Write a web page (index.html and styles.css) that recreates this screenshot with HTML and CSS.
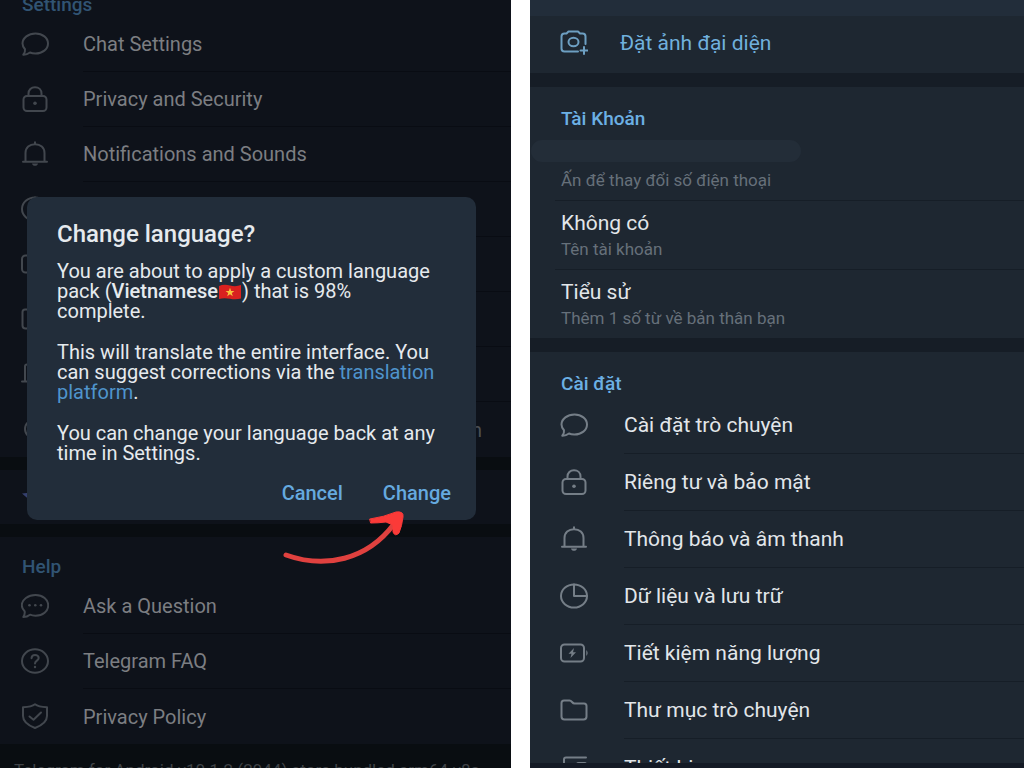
FILE: index.html
```html
<!DOCTYPE html>
<html lang="en">
<head>
    <meta charset="UTF-8">
    <meta name="viewport" content="width=device-width, initial-scale=1.0">
    <title>Telegram language settings</title>
    <link rel="stylesheet" href="styles.css">
</head>
<body>
    <!-- Shared icons -->
    <svg class="sprite" aria-hidden="true">
        <symbol id="i-chat" viewBox="0 0 28 26">
            <path d="M14.5 2.5C21.5 2.5 27 6.800 27 12.500S21.500 22.500 14.500 22.500C12.500 22.500 10.500 22.200 9 21.500C7 23 4.500 23.800 2.300 23.700C3.800 21.700 4.300 19.800 4 18.200C2.400 16.500 1.500 14.600 1.500 12.500C1.500 6.800 7.500 2.500 14.500 2.500Z"/>
        </symbol>
        <symbol id="i-lock" viewBox="0 0 28 26">
            <rect x="2.500" y="10" width="23" height="15" rx="3.500"/>
            <path d="M7.500 10V7.500C7.500 3.800 10.200 1.200 14 1.200S20.500 3.800 20.500 7.500V10"/>
            <circle class="dot" cx="14" cy="17.300" r="1.800"/>
        </symbol>
        <symbol id="i-bell" viewBox="0 0 28 26">
            <path d="M2 20.800H26M4.500 20.500V12C4.500 6.500 8.500 3.200 14 3.200S23.500 6.500 23.500 12V20.500M14 1.300V3"/>
            <path class="dot" d="M11 22.500H17C16.700 24 15.500 24.800 14 24.800S11.300 24 11 22.500Z"/>
        </symbol>
        <symbol id="i-data" viewBox="0 0 28 26">
            <ellipse cx="14" cy="13" rx="13" ry="11.500"/>
            <path d="M14 1.500V13H27"/>
        </symbol>
        <symbol id="i-battery" viewBox="0 0 28 26">
            <rect x="1" y="4.500" width="23" height="17" rx="3.500"/>
            <path class="dot" d="M14 8L8.500 13.800H11.500L10.500 18L16 12.200H13ZM26.300 10Q29 13 26.300 16Z"/>
        </symbol>
        <symbol id="i-folder" viewBox="0 0 28 26">
            <path d="M4 3.500H9.500C12 3.500 12 6.500 14.500 6.500H24C25.800 6.500 26.500 7.500 26.500 9V19.500C26.500 21.500 25.500 22.500 23.500 22.500H4.500C2.500 22.500 1.500 21.500 1.500 19.500V6C1.500 4.300 2.300 3.500 4 3.500Z"/>
        </symbol>
        <symbol id="i-devices" viewBox="0 0 28 26">
            <path d="M4 20V5.500Q4 3.500 6 3.500H26M1 20.500H16"/>
            <rect x="17" y="9" width="9" height="13" rx="1.500"/>
        </symbol>
        <symbol id="i-globe" viewBox="0 0 28 26">
            <ellipse cx="15" cy="13" rx="11" ry="10"/>
            <ellipse cx="15" cy="13" rx="5" ry="10"/>
        </symbol>
        <symbol id="i-star" viewBox="0 0 28 26">
            <path d="M14 1L17.500 9.500L27 10.500L20 16.500L22 25L14 20.500L6 25L8 16.500L1 10.500L10.500 9.500Z"/>
        </symbol>
        <symbol id="i-ask" viewBox="0 0 28 26">
            <path d="M14.500 2C21.800 2 27.200 6.400 27.200 12.300S21.800 22.700 14.500 22.700C12.500 22.700 10.600 22.400 9 21.700C7 23.300 4.500 24 2.300 24C3.600 22 4 20 3.600 18.200C1.900 16.500 .8 14.500 .8 12.300C.8 6.400 7.200 2 14.500 2Z"/>
            <circle class="dot" cx="8.500" cy="12.300" r="1.300"/>
            <circle class="dot" cx="14.300" cy="12.300" r="1.300"/>
            <circle class="dot" cx="20" cy="12.300" r="1.300"/>
        </symbol>
        <symbol id="i-faq" viewBox="0 0 28 26">
            <ellipse cx="14" cy="13" rx="13" ry="11.700"/>
            <path d="M10.500 10.200C10.700 8 12 6.900 14 6.900S17.700 8.200 17.700 10C17.700 12.500 14 12.800 14 15.500"/>
            <circle class="dot" cx="14" cy="19" r="1.200"/>
        </symbol>
        <symbol id="i-shield" viewBox="0 0 28 26">
            <path d="M14 1.200C17.500 3.800 21.500 4 26 4.300V13C26 19 20.500 22.500 14 25C7.500 22.500 2 19 2 13V4.300C6.500 4 10.500 3.800 14 1.200Z"/>
            <path d="M8.500 13.500L12.500 16.800L20 9.500"/>
        </symbol>
        <symbol id="i-camera" viewBox="0 0 28 26">
            <path d="M18 22.500H4.500C2.300 22.500 1.500 21.500 1.500 19.500V7.500C1.500 5.500 2.500 4.500 4.500 4.500H6.500L8.500 2.500H18L20 4.500H22.500C24.500 4.500 25.500 5.500 25.500 7.500V15"/>
            <ellipse cx="13.500" cy="13" rx="5" ry="4.300"/>
            <path d="M24 18V25M20.500 21.500H27.500"/>
        </symbol>
    </svg>

    <div class="screens">
        <section class="panel panel-en">
            <div class="scrolled">
                <h2 class="section-title">Settings</h2>
                <nav class="rows">
                    <a href="#" class="row"><svg class="icon"><use href="#i-chat"/></svg><span class="label">Chat Settings</span></a>
                    <a href="#" class="row"><svg class="icon"><use href="#i-lock"/></svg><span class="label">Privacy and Security</span></a>
                    <a href="#" class="row"><svg class="icon"><use href="#i-bell"/></svg><span class="label">Notifications and Sounds</span></a>
                    <a href="#" class="row" aria-label="Data and Storage"><svg class="icon"><use href="#i-data"/></svg><span class="label"></span></a>
                    <a href="#" class="row" aria-label="Power Saving"><svg class="icon"><use href="#i-battery"/></svg><span class="label"></span></a>
                    <a href="#" class="row" aria-label="Chat Folders"><svg class="icon"><use href="#i-folder"/></svg><span class="label"></span></a>
                    <a href="#" class="row" aria-label="Devices"><svg class="icon"><use href="#i-devices"/></svg><span class="label"></span></a>
                    <a href="#" class="row"><svg class="icon"><use href="#i-globe"/></svg><span class="label value">English</span></a>
                </nav>
                <div class="gap"></div>
                <nav class="rows">
                    <a href="#" class="row premium" aria-label="Telegram Premium"><svg class="icon"><use href="#i-star"/></svg><span class="label"></span></a>
                </nav>
                <div class="gap"></div>
                <h2 class="section-title">Help</h2>
                <nav class="rows">
                    <a href="#" class="row"><svg class="icon"><use href="#i-ask"/></svg><span class="label">Ask a Question</span></a>
                    <a href="#" class="row"><svg class="icon"><use href="#i-faq"/></svg><span class="label">Telegram FAQ</span></a>
                    <a href="#" class="row"><svg class="icon"><use href="#i-shield"/></svg><span class="label">Privacy Policy</span></a>
                </nav>
                <p class="version">Telegram for Android v10.1.2 (2944) store bundled arm64-v8a</p>
            </div>

            <div class="dialog" role="dialog" aria-labelledby="dialog-title">
                <h1 id="dialog-title">Change language?</h1>
                <p>You are about to apply a custom language<br>pack (<strong>Vietnamese</strong><svg class="flag" viewBox="0 0 24 16" role="img" aria-label="Vietnam"><path fill="#d9211f" d="M1 2Q6 0 12 1.500T23 1V14.500Q18 16 12 14.800T1 15Z"/><path fill="#f8c33c" d="M12 3.800L13.200 7H16.400L13.800 9L14.800 12.200L12 10.300L9.200 12.200L10.200 9L7.600 7H10.800Z"/></svg>) that is 98%<br>complete.</p>
                <p>This will translate the entire interface. You<br>can suggest corrections via the <a href="#">translation<br>platform</a>.</p>
                <p>You can change your language back at any<br>time in Settings.</p>
                <div class="actions">
                    <button type="button">Cancel</button>
                    <button type="button">Change</button>
                </div>
            </div>

            <svg class="arrow" viewBox="0 0 124 58" aria-hidden="true">
                <path d="M3 44C42 58 84 49 111 13"/>
                <path class="head" d="M87 8Q101 6 113 1Q121 0 120 6Q119 15 116 22Q112 26 110 21L110 14L103 11Q95 12 88 12Z"/>
            </svg>
        </section>

        <section class="panel panel-vi" lang="vi">
            <div class="topbar"></div>
            <div class="content">
                <nav class="rows">
                    <a href="#" class="row photo"><svg class="icon"><use href="#i-camera"/></svg><span class="label">Đặt ảnh đại diện</span></a>
                </nav>
                <div class="gap"></div>
                <h2 class="section-title">Tài Khoản</h2>
                <div class="account">
                    <div class="entry">
                        <div class="masked"></div>
                        <div class="hint">Ấn để thay đổi số điện thoại</div>
                    </div>
                    <div class="entry">
                        <div class="name">Không có</div>
                        <div class="hint">Tên tài khoản</div>
                    </div>
                    <div class="entry">
                        <div class="name">Tiểu sử</div>
                        <div class="hint">Thêm 1 số từ về bản thân bạn</div>
                    </div>
                </div>
                <div class="gap"></div>
                <h2 class="section-title">Cài đặt</h2>
                <nav class="rows">
                    <a href="#" class="row"><svg class="icon"><use href="#i-chat"/></svg><span class="label">Cài đặt trò chuyện</span></a>
                    <a href="#" class="row"><svg class="icon"><use href="#i-lock"/></svg><span class="label">Riêng tư và bảo mật</span></a>
                    <a href="#" class="row"><svg class="icon"><use href="#i-bell"/></svg><span class="label">Thông báo và âm thanh</span></a>
                    <a href="#" class="row"><svg class="icon"><use href="#i-data"/></svg><span class="label">Dữ liệu và lưu trữ</span></a>
                    <a href="#" class="row"><svg class="icon"><use href="#i-battery"/></svg><span class="label">Tiết kiệm năng lượng</span></a>
                    <a href="#" class="row"><svg class="icon"><use href="#i-folder"/></svg><span class="label">Thư mục trò chuyện</span></a>
                    <a href="#" class="row"><svg class="icon"><use href="#i-devices"/></svg><span class="label">Thiết bị</span></a>
                </nav>
            </div>
            <div class="bottombar"></div>
        </section>
    </div>
</body>
</html>
```
FILE: styles.css
```css
* {
    box-sizing: border-box;
}
body {
    margin: 0;
    background: #fff;
    font-family: Roboto, "Noto Sans", sans-serif;
}
h1, h2, p {
    margin: 0;
}
a {
    color: inherit;
    text-decoration: none;
}
.sprite {
    display: none;
}
.screens {
    display: grid;
    grid-template-columns: 511fr 494fr;
    gap: 19px;
    height: 100vh;
    overflow: hidden;
}
.panel {
    position: relative;
    display: flex;
    flex-direction: column;
    min-width: 0;
    min-height: 0;
    overflow: hidden;
    background: var(--bg);
}
.panel-en {
    --row: 55px;
    --row-font: 20px;
    --pad: 21px;
    --icon-gap: 34px;
    --gap-height: 13px;
    --bg: #0e121a;
    --gap: #090d11;
    --line: #090c13;
    --text: #7c7e82;
    --icon: #42474e;
    --title: #315473;
}
.panel-vi {
    --row: 57px;
    --row-font: 21px;
    --pad: 30px;
    --icon-gap: 36px;
    --gap-height: 14px;
    --bg: #1e2731;
    --gap: #161d26;
    --line: #161e27;
    --text: #e2e6ea;
    --icon: #757e87;
    --title: #6cb0e4;
}
/* list is scrolled so the first title sits at the top edge */
.scrolled {
    margin-top: -25px;
}
.content {
    flex: 1;
    min-height: 0;
    overflow: hidden;
}
.section-title {
    padding: 20px var(--pad) 2px 22px;
    font-size: 19px;
    line-height: 20px;
    font-weight: 500;
    color: var(--title);
}
.panel-vi .section-title {
    padding: 22px var(--pad) 3px 31px;
}
.row {
    display: flex;
    align-items: center;
    height: var(--row);
    padding-left: var(--pad);
    gap: var(--icon-gap);
    font-size: var(--row-font);
    color: var(--text);
}
.icon {
    flex: none;
    width: 28px;
    height: 26px;
    margin-bottom: 2px;
    fill: none;
    stroke: var(--icon);
    stroke-width: 2;
    stroke-linecap: round;
    stroke-linejoin: round;
}
.dot {
    fill: var(--icon);
    stroke: none;
}
.label {
    flex: 1;
    display: flex;
    align-items: center;
    align-self: stretch;
    border-bottom: 1px solid var(--line);
}
.row:last-child .label {
    border-bottom: none;
}
.value {
    justify-content: flex-end;
    padding-right: 29px;
    color: #4b4e53;
}
.premium {
    height: 54px;
}
.premium .icon {
    fill: #35406e;
    stroke: none;
}
.photo {
    --icon: #6d9fc2;
    --icon-gap: 32px;
    padding-bottom: 3px;
    color: #70b0dd;
}
.gap {
    height: var(--gap-height);
    background: var(--gap);
}
.version {
    padding: 16px 14px;
    background: var(--gap);
    font-size: 17px;
    line-height: 20px;
    white-space: nowrap;
    color: #3f4246;
}

/* dialog */
.dialog {
    position: absolute;
    top: 197px;
    left: 27px;
    right: 35px;
    padding: 23px 20px 12px 30px;
    border-radius: 10px;
    background: #222d3a;
    color: #e6eaee;
    font-size: 20px;
    line-height: 20px;
    white-space: nowrap;
}
.dialog h1 {
    margin-bottom: 13px;
    font-size: 24px;
    line-height: 28px;
    font-weight: 500;
}
.dialog p {
    margin-bottom: 21px;
}
.dialog p:last-of-type {
    margin-bottom: 15px;
}
.dialog strong {
    font-weight: 500;
}
.dialog a {
    color: #4f94cc;
}
.flag {
    width: 24px;
    height: 16px;
    vertical-align: -2px;
}
.actions {
    display: flex;
    justify-content: flex-end;
    gap: 30px;
}
.actions button {
    padding: 5px;
    border: none;
    background: none;
    font: 500 20px/20px Roboto, "Noto Sans", sans-serif;
    color: #65a9df;
    cursor: pointer;
}
.arrow {
    position: absolute;
    top: 511px;
    left: 283px;
    width: 124px;
    height: 58px;
    fill: none;
    stroke: #e0413f;
    stroke-width: 5;
    stroke-linecap: round;
}
.arrow .head {
    fill: #fb3a38;
    stroke: #fb3a38;
    stroke-width: 1;
}

/* Vietnamese screen */
.topbar {
    flex: none;
    height: 16px;
    background: #222d3a;
}
.bottombar {
    flex: none;
    height: 5px;
    background: #141a25;
}
.entry {
    margin-left: 25px;
    padding: 10px 0 8px 6px;
    border-bottom: 1px solid var(--line);
}
.entry:last-child {
    border-bottom: none;
}
.name {
    font-size: 21px;
    line-height: 24px;
    color: var(--text);
}
.hint {
    margin-top: 2px;
    font-size: 17px;
    line-height: 24px;
    color: #66707a;
}
.masked {
    width: 270px;
    height: 22px;
    margin: -2px 0 6px -30px;
    border-radius: 11px;
    background: #232d38;
}
```
